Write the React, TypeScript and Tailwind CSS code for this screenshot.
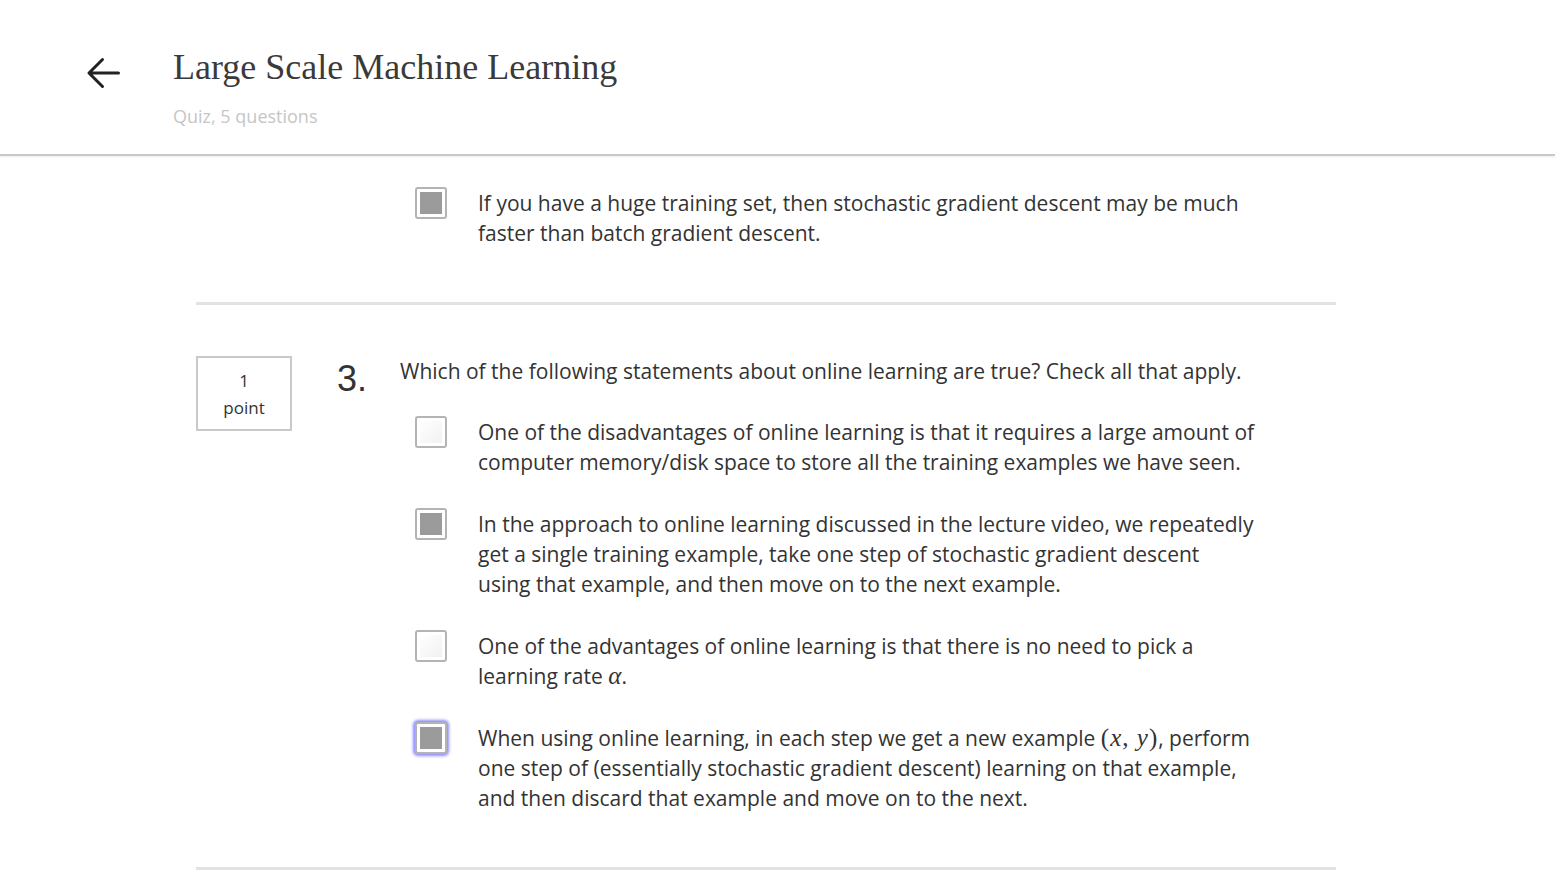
import React from 'react';

type BoxState = 'checked' | 'empty' | 'focused';

function Box({ state }: { state: BoxState }) {
	const ring = state === 'focused' ? 'shadow-[0_0_3px_2px_#8c8cff]' : '';
	return (
		<div
			className={`w-8 h-8 shrink-0 rounded-[3px] border-2 border-[#b4b4b4] bg-white p-[3px] ${ring}`}
		>
			{state === 'empty' ? (
				<div className="w-full h-full bg-gradient-to-br from-white to-[#f1f1f1]" />
			) : (
				<div className="w-full h-full bg-[#9b9b9b]" />
			)}
		</div>
	);
}

function Option({ state, children }: { state: BoxState; children: React.ReactNode }) {
	return (
		<div className="flex items-start ml-[219px]">
			<Box state={state} />
			<div className="ml-[31px] w-[778px] text-[21px] leading-[30px] text-[#333] mt-px">
				{children}
			</div>
		</div>
	);
}

const serif = "font-['Liberation_Serif',serif]";

export default function App() {
	return (
		<div className="min-h-screen bg-white font-['Open_Sans',sans-serif] text-[#333]">
			{/* Header */}
			<header className="relative h-[156px] border-b-2 border-[#c8c8c8] shadow-[0_1px_2px_rgba(0,0,0,0.08)]">
				<div className="flex items-start">
					<svg
						className="ml-[86px] mt-[57px] shrink-0"
						width="35"
						height="32"
						viewBox="0 0 35 32"
						fill="none"
						stroke="#222"
						strokeWidth="3"
						strokeLinecap="round"
						strokeLinejoin="round"
					>
						<path d="M32.5 16H3M16.5 2.5L3 16l13.5 13.5" />
					</svg>
					<div className="ml-[52px]">
						<h1 className={`${serif} mt-[46px] text-[36px] leading-[42px] text-[#3a3a3a]`}>
							Large Scale Machine Learning
						</h1>
						<div className="mt-[16px] text-[18px] leading-[24px] text-[#c6c6c6]">
							Quiz, 5 questions
						</div>
					</div>
				</div>
			</header>

			{/* Content */}
			<main className="ml-[196px] w-[1140px] pt-[31px]">
				<Option state="checked">
					If you have a huge training set, then stochastic gradient descent may be much faster than batch
					gradient descent.
				</Option>

				<div className="mt-[54px] h-[3px] bg-[#e2e2e2]" />

				<section className="pt-[51px] flex items-start">
					<div className="w-[96px] h-[75px] shrink-0 border-2 border-[#c9c9c9] flex flex-col items-center justify-center text-[17px] leading-[27px] text-[#333]">
						<span>1</span>
						<span>point</span>
					</div>
					<div className="ml-[45px] font-['Liberation_Sans',sans-serif] text-[36px] leading-[40px] mt-[3px] text-[#333] w-[63px] shrink-0">
						3.
					</div>
					<div className="flex-1 -ml-[204px]">
						<div className="ml-[204px] text-[21px] leading-[30px] text-[#333]">
							Which of the following statements about online learning are true? Check all that apply.
						</div>
						<div className="mt-[30px] flex flex-col gap-[31px]">
							<Option state="empty">
								One of the disadvantages of online learning is that it requires a large amount of computer
								memory/disk space to store all the training examples we have seen.
							</Option>
							<Option state="checked">
								In the approach to online learning discussed in the lecture video, we repeatedly get a single
								training example, take one step of stochastic gradient descent using that example, and then move
								on to the next example.
							</Option>
							<Option state="empty">
								One of the advantages of online learning is that there is no need to pick a learning rate{' '}
								<span className={`${serif} italic text-[25px] leading-[30px]`}>α</span>.
							</Option>
							<Option state="focused">
								When using online learning, in each step we get a new example{' '}
								<span className={`${serif} text-[25px] leading-[30px] tracking-[1px]`}>
									(<i>x</i>, <i>y</i>)
								</span>
								, perform one step of (essentially stochastic gradient descent) learning on that example, and then
								discard that example and move on to the next.
							</Option>
						</div>
					</div>
				</section>

				<div className="mt-[54px] h-[3px] bg-[#e2e2e2]" />
				<div className="h-10" />
			</main>
		</div>
	);
}
